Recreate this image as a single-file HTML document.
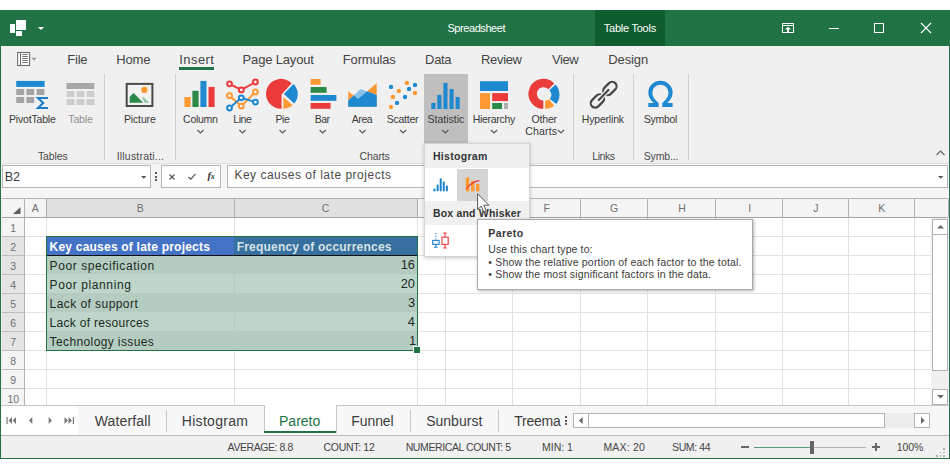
<!DOCTYPE html>
<html>
<head>
<meta charset="utf-8">
<title>Spreadsheet</title>
<style>
*{box-sizing:border-box;margin:0;padding:0}
html,body{width:950px;height:469px;overflow:hidden;background:#fff}
body{font-family:"Liberation Sans",sans-serif;color:#3c3c3c;position:relative}
.a,.t,svg{position:absolute}
.t{white-space:nowrap;line-height:1}
svg{overflow:visible}
.vsep{position:absolute;width:1px;background:#d0d0d0;top:74px;height:86px}
.ch{position:absolute;height:20px;top:198px;border-right:1px solid #c4c4c4;border-bottom:1px solid #a8a8a8;font-size:11px;color:#666;text-align:center;line-height:19px}
.rh{position:absolute;left:2px;width:23px;height:20px;border-bottom:1px solid #d0d0d0;border-right:1px solid #a8a8a8;font-size:11px;color:#666;text-align:center;line-height:20px}
.hl{position:absolute;height:1px;background:#e1e1e1;left:25px;width:906px}
.vl{position:absolute;width:1px;background:#e1e1e1;top:218px;height:188px}
</style>
</head>
<body>
<!-- window -->
<div class="a" style="left:0;top:10px;width:950px;height:449px;background:#f0f0f0;border:1px solid #217346;border-top:0"></div>
<div class="a" style="left:0;top:10px;width:950px;height:36px;background:#217346"></div>
<div class="a" style="left:594.6px;top:10px;width:70.8px;height:36px;background:#0f5c2e"></div>

<!-- title bar icons -->
<div class="a" style="left:16px;top:20px;width:10px;height:10px;background:#fff"></div>
<div class="a" style="left:10px;top:24px;width:5px;height:9px;background:#fff"></div>
<div class="a" style="left:16px;top:31px;width:6px;height:5px;background:#fff"></div>
<svg style="left:38px;top:27px" width="6" height="3"><path d="M0 0H6L3 3Z" fill="#fff"/></svg>
<svg style="left:782px;top:23px" width="12" height="10" fill="none" stroke="#fff" stroke-width="1"><rect x=".5" y=".5" width="11" height="9"/><path d="M.5 2.5H11.5"/><path d="M6 3.7L9 6.6H6.9V9H5.1V6.6H3Z" fill="#fff" stroke="none"/></svg>
<div class="a" style="left:829px;top:28px;width:10px;height:1px;background:#fff"></div>
<div class="a" style="left:874px;top:23px;width:10px;height:10px;border:1px solid #fff"></div>
<svg style="left:921px;top:23px" width="10" height="10" stroke="#fff" stroke-width="1.1"><path d="M0 0L10 10M10 0L0 10"/></svg>

<!-- menu icon -->
<svg style="left:17px;top:52px" width="22" height="14" fill="none"><rect x=".6" y=".5" width="12" height="13" fill="#fff" stroke="#6e6e6e" stroke-width="1.1"/><path d="M3.5 1V13" stroke="#6e6e6e"/><path d="M5.2 2.5H10.8M5.2 4.5H10.8M5.2 6.5H10.8M5.2 8.5H10.8M5.2 10.5H10.8" stroke="#777"/><path d="M14.3 5.7H19.6L17 8.7Z" fill="#9a9a9a"/></svg>

<!-- insert underline -->
<div class="a" style="left:179.3px;top:67px;width:34.7px;height:3px;background:#217346"></div>

<!-- ribbon separators -->
<div class="vsep" style="left:104.2px"></div>
<div class="vsep" style="left:174.5px"></div>
<div class="vsep" style="left:573px"></div>
<div class="vsep" style="left:633px"></div>
<div class="vsep" style="left:687.5px"></div>

<!-- statistic highlight -->
<div class="a" style="left:423.5px;top:74px;width:44.3px;height:70px;background:#bfbfbf"></div>

<!-- PivotTable -->
<svg style="left:16px;top:80px" width="34" height="30">
<rect x=".2" y=".9" width="28.4" height="6" fill="#1e88d0"/>
<g fill="#a3a3a3"><rect x=".2" y="9" width="8" height="6"/><rect x="10.4" y="9" width="7.8" height="6"/><rect x="20.6" y="9" width="7.8" height="6"/><rect x=".2" y="17" width="8" height="6"/><rect x="10.4" y="17" width="7.8" height="6"/></g>
<path d="M32 18H22L27.2 23L22 28H32" fill="none" stroke="#1b7fc8" stroke-width="2.1" stroke-linejoin="miter"/>
</svg>
<!-- Table -->
<svg style="left:66px;top:82px" width="30" height="24">
<rect x=".5" y="1" width="27.8" height="6" fill="#a8a8a8"/>
<g fill="#cdcdcd"><rect x=".5" y="9" width="8" height="6"/><rect x="10.6" y="9" width="7.8" height="6"/><rect x="20.6" y="9" width="7.8" height="6"/><rect x=".5" y="17" width="8" height="6"/><rect x="10.6" y="17" width="7.8" height="6"/><rect x="20.6" y="17" width="7.8" height="6"/></g>
</svg>
<!-- Picture -->
<svg style="left:125px;top:82px" width="30" height="26">
<rect x="1.7" y="1.9" width="25.7" height="22.1" fill="#f2f2f2" stroke="#4c4a4a" stroke-width="2"/>
<circle cx="19.4" cy="7.9" r="3.1" fill="#ff9933"/>
<path d="M4.7 20.7V14.7L8.6 11L18.2 20.7Z" fill="#2b8a4a"/>
<path d="M17 16L18.6 14.9L24.2 20.7H20Z" fill="#8fc3a0"/>
</svg>
<!-- Column -->
<svg style="left:184px;top:80px" width="32" height="28">
<rect x=".4" y="17" width="6.2" height="10" fill="#ff9933"/><rect x="8.4" y="10.8" width="6.2" height="16.2" fill="#2b8a4a"/><rect x="16.4" y=".9" width="6.1" height="26.1" fill="#1e88d0"/><rect x="24.5" y="6.9" width="6.1" height="20.1" fill="#ec3b3b"/>
</svg>
<!-- Line -->
<svg style="left:226px;top:78px" width="34" height="34" fill="none" stroke-width="2">
<g stroke="#ff9933"><path d="M3.5 17.7L15.3 28.1L29.4 13.9"/><circle cx="3.5" cy="17.7" r="2.4" fill="#f2f2f2"/><circle cx="15.3" cy="28.1" r="2.4" fill="#f2f2f2"/><circle cx="29.4" cy="13.9" r="2.4" fill="#f2f2f2"/></g>
<g stroke="#ec3b3b"><path d="M3.5 5.8L15.3 11.9L29.4 4"/><circle cx="3.5" cy="5.8" r="2.4" fill="#f2f2f2"/><circle cx="15.3" cy="11.9" r="2.4" fill="#f2f2f2"/><circle cx="29.4" cy="4" r="2.4" fill="#f2f2f2"/></g>
<g stroke="#1e88d0"><path d="M3.5 30L15.3 19.8L29.4 24.1"/><circle cx="3.5" cy="30" r="2.4" fill="#f2f2f2"/><circle cx="15.3" cy="19.8" r="2.4" fill="#f2f2f2"/><circle cx="29.4" cy="24.1" r="2.4" fill="#f2f2f2"/></g>
</svg>
<!-- Pie -->
<svg style="left:266.8px;top:78px" width="32" height="32">
<path d="M14.6 16.6L24.6 5.2A15 15 0 1 0 14.6 30.8Z" fill="#ec3b3b"/>
<path d="M16.9 16.1L26.5 5.9A14.4 14.4 0 0 1 27.2 25.6Z" fill="#1e88d0"/>
<path d="M16.4 19L25.6 27.3A14.6 14.6 0 0 1 16.4 30.8Z" fill="#ff9933"/>
</svg>
<!-- Bar -->
<svg style="left:310px;top:78px" width="28" height="32">
<rect x=".6" y="1" width="10" height="5.8" fill="#ff9933"/><rect x=".6" y="9" width="16" height="5.8" fill="#2b8a4a"/><rect x=".6" y="17" width="25.8" height="5.8" fill="#1e88d0"/><rect x=".6" y="25" width="20" height="5.8" fill="#ec3b3b"/>
</svg>
<!-- Area -->
<svg style="left:348px;top:82px" width="30" height="26">
<path d="M.3 9.2L10.3 16.9L28.7 1.1V24.7H.3Z" fill="#ff9933"/>
<path d="M.3 18.6L12.5 7L19.3 9.6L28.7 13V24.7H.3Z" fill="#8cc0e6"/>
<path d="M.3 18.6L5.8 13.4L10.3 16.9L19 9.5L28.7 13V24.7H.3Z" fill="#1e88d0"/>
</svg>
<!-- Scatter -->
<svg style="left:388px;top:80px" width="30" height="30">
<g fill="#1e88d0"><circle cx="3" cy="6.9" r="2.2"/><circle cx="21" cy="8.9" r="2.2"/><circle cx="27" cy="5" r="2.2"/><circle cx="17" cy="17" r="2.2"/><circle cx="9" cy="22.9" r="2.2"/></g>
<g fill="#ff9933"><circle cx="18.9" cy="2.9" r="2.2"/><circle cx="10.8" cy="10.9" r="2.2"/><circle cx="27" cy="13" r="2.2"/><circle cx="4.9" cy="17" r="2.2"/><circle cx="3" cy="27" r="2.2"/></g>
</svg>
<!-- Statistic -->
<svg style="left:431px;top:82px" width="30" height="28" fill="#1e88d0">
<rect x=".3" y="20.9" width="4.2" height="6.1"/><rect x="6.3" y="12.9" width="4.2" height="14.1"/><rect x="12.4" y=".9" width="4.1" height="26.1"/><rect x="18.5" y="6.9" width="4.1" height="20.1"/><rect x="24.6" y="14.9" width="4.1" height="12.1"/>
</svg>
<!-- Hierarchy -->
<svg style="left:480px;top:81px" width="28" height="28">
<rect x="0" y=".2" width="28" height="9.8" fill="#1e88d0"/><rect x="0" y="12.1" width="10.1" height="15.9" fill="#ff9933"/><rect x="12.2" y="12.1" width="15.8" height="8" fill="#ec3b3b"/><rect x="12.2" y="22" width="9.8" height="6" fill="#2b8a4a"/><rect x="24" y="22" width="4" height="6" fill="#b0b0b0"/>
</svg>
<!-- Other charts donut -->
<svg style="left:529px;top:78px" width="32" height="32" fill="none" stroke-width="8.3">
<path d="M14.3 26.8A10.9 10.9 0 1 1 22.3 8.3" stroke="#ec3b3b"/>
<path d="M23.5 9.4A10.9 10.9 0 0 1 24 23.4" stroke="#1e88d0"/>
<path d="M22.7 24.6A10.9 10.9 0 0 1 16.1 26.8" stroke="#ff9933"/>
</svg>
<!-- Hyperlink -->
<svg style="left:589px;top:80px" width="30" height="30" fill="none" stroke="#484848" stroke-width="2.2" stroke-linecap="round">
<g transform="rotate(-45 20.9 8.5)"><rect x="13.3" y="4.1" width="15.2" height="8.8" rx="4.4"/></g>
<g transform="rotate(-45 8.4 21)"><rect x=".8" y="16.6" width="15.2" height="8.8" rx="4.4"/></g>
<path d="M9.6 20.2L19.6 9.8" stroke="#f0f0f0" stroke-width="4.6" stroke-linecap="butt"/>
<path d="M9.8 20L19.4 10"/>
</svg>
<!-- Symbol omega -->
<svg style="left:648px;top:80px" width="26" height="28">
<path d="M.3 26.9H10.6V22.9C6.5 20 4.3 16.5 4.3 12.5A8.1 7.7 0 0 1 20.5 12.5C20.5 16.5 18.4 20 14.3 22.9V26.9H24.6V22.9H19.2C22.8 20 24.6 16.5 24.6 12.5A12.15 11.7 0 0 0 .3 12.5C.3 16.5 2.1 20 5.7 22.9H.3Z" fill="#1e88d0"/>
</svg>
<!-- chevrons -->
<svg style="left:0;top:0" width="950" height="140" fill="none" stroke="#5a5a5a" stroke-width="1.25">
<path d="M197.4 130L200.5 133L203.6 130"/>
<path d="M239.4 130L242.5 133L245.6 130"/>
<path d="M279.5 130L282.6 133L285.7 130"/>
<path d="M319.6 130L322.7 133L325.8 130"/>
<path d="M359.4 130L362.5 133L365.6 130"/>
<path d="M400 130L403.1 133L406.2 130"/>
<path d="M442.2 130L445.3 133L448.4 130"/>
<path d="M490.9 130L494 133L497.1 130"/>
<path d="M557.9 130L561 133L564.1 130"/>
</svg>


<!-- ribbon collapse caret -->
<svg style="left:935.7px;top:149.7px" width="9" height="6" fill="none" stroke="#666" stroke-width="1.2"><path d="M.5 5L4.5 1L8.5 5"/></svg>

<!-- formula bar -->
<div class="a" style="left:1px;top:163px;width:948px;height:2px;background:#dedede"></div>
<div class="a" style="left:1px;top:164px;width:948px;height:34px;background:#f5f5f5"></div>
<div class="a" style="left:2px;top:165px;width:149px;height:23px;background:#fff;border:1px solid #b6b6b6"></div>
<svg style="left:141px;top:175.5px" width="6" height="3"><path d="M0 0H5.4L2.7 2.8Z" fill="#555"/></svg>
<div class="a" style="left:155px;top:172px;width:2px;height:2px;background:#5a5a5a"></div>
<div class="a" style="left:155px;top:175.5px;width:2px;height:2px;background:#5a5a5a"></div>
<div class="a" style="left:155px;top:179px;width:2px;height:2px;background:#5a5a5a"></div>
<div class="a" style="left:161px;top:165px;width:60px;height:23px;background:#fff;border:1px solid #b6b6b6"></div>
<svg style="left:169px;top:174px" width="6" height="6" stroke="#555" stroke-width="1.1"><path d="M.5 .5L5.5 5.5M5.5 .5L.5 5.5"/></svg>
<svg style="left:188px;top:173px" width="8" height="7" fill="none" stroke="#555" stroke-width="1.2"><path d="M.5 4L2.8 6.2L7.5 .8"/></svg>
<div class="t" style="left:207.5px;top:170.6px;font-family:'Liberation Serif',serif;font-style:italic;font-weight:700;font-size:10.5px;color:#333">f<span style="font-size:8px;margin-left:-0.3px">x</span></div>
<div class="a" style="left:227px;top:165px;width:721px;height:23px;background:#fff;border:1px solid #b6b6b6"></div>
<svg style="left:938px;top:175.5px" width="6" height="3"><path d="M0 0H5.4L2.7 2.8Z" fill="#555"/></svg>

<div class="a" style="left:2px;top:198px;width:946px;height:208px;background:#fff"></div>
<div class="a" style="left:2px;top:198px;width:946px;height:20px;background:#f4f4f4;border-top:1px solid #b2b2b2;border-bottom:1px solid #a4a4a4"></div>
<div class="a" style="left:47px;top:199px;width:370px;height:18px;background:#e0e0e0"></div>
<div class="a" style="left:24.0px;top:199px;width:1px;height:18px;background:#b2b2b2"></div>
<div class="a" style="left:46.0px;top:199px;width:1px;height:18px;background:#b2b2b2"></div>
<div class="a" style="left:234.0px;top:199px;width:1px;height:18px;background:#b2b2b2"></div>
<div class="a" style="left:417.0px;top:199px;width:1px;height:18px;background:#b2b2b2"></div>
<div class="a" style="left:445.0px;top:199px;width:1px;height:18px;background:#b2b2b2"></div>
<div class="a" style="left:512.0px;top:199px;width:1px;height:18px;background:#b2b2b2"></div>
<div class="a" style="left:580.0px;top:199px;width:1px;height:18px;background:#b2b2b2"></div>
<div class="a" style="left:647.0px;top:199px;width:1px;height:18px;background:#b2b2b2"></div>
<div class="a" style="left:715.0px;top:199px;width:1px;height:18px;background:#b2b2b2"></div>
<div class="a" style="left:782.0px;top:199px;width:1px;height:18px;background:#b2b2b2"></div>
<div class="a" style="left:848.0px;top:199px;width:1px;height:18px;background:#b2b2b2"></div>
<div class="a" style="left:914.0px;top:199px;width:1px;height:18px;background:#b2b2b2"></div>
<div class="a" style="left:948.0px;top:199px;width:1px;height:18px;background:#b2b2b2"></div>
<div class="a" style="left:2px;top:218px;width:22px;height:188px;background:#f4f4f4"></div>
<div class="a" style="left:2px;top:237px;width:22px;height:113px;background:#e4e4e4"></div>
<div class="a" style="left:24px;top:218px;width:1px;height:188px;background:#b2b2b2"></div>
<div class="a" style="left:2px;top:236px;width:22px;height:1px;background:#bebebe"></div>
<div class="a" style="left:25px;top:236px;width:906px;height:1px;background:#e2e2e2"></div>
<div class="a" style="left:2px;top:255px;width:22px;height:1px;background:#bebebe"></div>
<div class="a" style="left:25px;top:255px;width:906px;height:1px;background:#e2e2e2"></div>
<div class="a" style="left:2px;top:274px;width:22px;height:1px;background:#bebebe"></div>
<div class="a" style="left:25px;top:274px;width:906px;height:1px;background:#e2e2e2"></div>
<div class="a" style="left:2px;top:293px;width:22px;height:1px;background:#bebebe"></div>
<div class="a" style="left:25px;top:293px;width:906px;height:1px;background:#e2e2e2"></div>
<div class="a" style="left:2px;top:312px;width:22px;height:1px;background:#bebebe"></div>
<div class="a" style="left:25px;top:312px;width:906px;height:1px;background:#e2e2e2"></div>
<div class="a" style="left:2px;top:331px;width:22px;height:1px;background:#bebebe"></div>
<div class="a" style="left:25px;top:331px;width:906px;height:1px;background:#e2e2e2"></div>
<div class="a" style="left:2px;top:350px;width:22px;height:1px;background:#bebebe"></div>
<div class="a" style="left:25px;top:350px;width:906px;height:1px;background:#e2e2e2"></div>
<div class="a" style="left:2px;top:369px;width:22px;height:1px;background:#bebebe"></div>
<div class="a" style="left:25px;top:369px;width:906px;height:1px;background:#e2e2e2"></div>
<div class="a" style="left:2px;top:388px;width:22px;height:1px;background:#bebebe"></div>
<div class="a" style="left:25px;top:388px;width:906px;height:1px;background:#e2e2e2"></div>
<div class="a" style="left:2px;top:407px;width:22px;height:1px;background:#bebebe"></div>
<div class="a" style="left:25px;top:407px;width:906px;height:1px;background:#e2e2e2"></div>
<div class="a" style="left:46.0px;top:218px;width:1px;height:188px;background:#e2e2e2"></div>
<div class="a" style="left:234.0px;top:218px;width:1px;height:188px;background:#e2e2e2"></div>
<div class="a" style="left:417.0px;top:218px;width:1px;height:188px;background:#e2e2e2"></div>
<div class="a" style="left:445.0px;top:218px;width:1px;height:188px;background:#e2e2e2"></div>
<div class="a" style="left:512.0px;top:218px;width:1px;height:188px;background:#e2e2e2"></div>
<div class="a" style="left:580.0px;top:218px;width:1px;height:188px;background:#e2e2e2"></div>
<div class="a" style="left:647.0px;top:218px;width:1px;height:188px;background:#e2e2e2"></div>
<div class="a" style="left:715.0px;top:218px;width:1px;height:188px;background:#e2e2e2"></div>
<div class="a" style="left:782.0px;top:218px;width:1px;height:188px;background:#e2e2e2"></div>
<div class="a" style="left:848.0px;top:218px;width:1px;height:188px;background:#e2e2e2"></div>
<div class="a" style="left:914.0px;top:218px;width:1px;height:188px;background:#e2e2e2"></div>
<div class="a" style="left:46px;top:236px;width:188px;height:19px;background:#4472c4"></div>
<div class="a" style="left:234px;top:236px;width:184px;height:19px;background:#376f9f"></div>
<div class="a" style="left:46px;top:255px;width:372px;height:19px;background:#b5cdc0"></div>
<div class="a" style="left:46px;top:274px;width:372px;height:19px;background:#bed5c9"></div>
<div class="a" style="left:234px;top:275px;width:1px;height:18px;background:#b3cabd"></div>
<div class="a" style="left:46px;top:293px;width:372px;height:19px;background:#b5cdc0"></div>
<div class="a" style="left:46px;top:312px;width:372px;height:19px;background:#bed5c9"></div>
<div class="a" style="left:234px;top:313px;width:1px;height:18px;background:#b3cabd"></div>
<div class="a" style="left:46px;top:331px;width:372px;height:19px;background:#b5cdc0"></div>
<div class="a" style="left:47px;top:254.5px;width:370px;height:1px;background:#111"></div>
<div class="a" style="left:46px;top:236px;width:372px;height:115px;border:1px solid #217346"></div>
<div class="a" style="left:413px;top:346px;width:7px;height:7px;background:#217346;border:1px solid #fff;border-right:0;border-bottom:0"></div>
<div class="a" style="left:931px;top:218px;width:17px;height:188px;background:#f0f0f0"></div>
<div class="a" style="left:932px;top:219px;width:15.5px;height:16px;background:#fff;border:1px solid #b4b4b4"></div>
<div class="a" style="left:932px;top:234px;width:15.5px;height:137px;background:#fff;border:1px solid #b4b4b4"></div>
<div class="a" style="left:932px;top:388.5px;width:15.5px;height:16px;background:#fff;border:1px solid #b4b4b4"></div>
<svg style="left:936.5px;top:225px" width="7" height="4"><path d="M0 3.6L3.5 0L7 3.6Z" fill="#666"/></svg>
<svg style="left:936.5px;top:395px" width="7" height="4"><path d="M0 0L3.5 3.6L7 0Z" fill="#666"/></svg>
<svg style="left:13px;top:207px" width="8" height="7"><path d="M7.5 0V7H0Z" fill="#5e5e5e"/></svg>

<!-- popup -->
<div class="a" style="left:424px;top:143px;width:106px;height:114px;background:#fff;border:1px solid #d4d4d4;box-shadow:0 1px 4px rgba(0,0,0,.22);z-index:5"></div>
<div class="a" style="left:425px;top:144px;width:104px;height:24px;background:#f0f0f0;z-index:5"></div>
<div class="a" style="left:425px;top:201px;width:104px;height:23.5px;background:#f0f0f0;z-index:5"></div>
<div class="a" style="left:457px;top:169px;width:31px;height:31.5px;background:#d4d4d4;z-index:5"></div>
<!-- histogram small icon -->
<svg style="left:433px;top:178px;z-index:6" width="16" height="14" fill="#1e82cd">
<rect x=".5" y="10.4" width="2" height="3" rx=".8"/><rect x="3.6" y="6.6" width="2" height="6.8" rx=".8"/><rect x="6.7" y=".2" width="2" height="13.2" rx=".8"/><rect x="9.8" y="3.6" width="2" height="9.8" rx=".8"/><rect x="12.9" y="7.5" width="2" height="5.9" rx=".8"/></svg>
<!-- pareto small icon -->
<svg style="left:465px;top:177px;z-index:6" width="16" height="15">
<rect x=".8" y=".5" width="3.5" height="13.9" fill="#ff9933"/><rect x="6" y="3.8" width="3.4" height="10.6" fill="#ff9933"/><rect x="11" y="6.8" width="3.4" height="7.6" fill="#ff9933"/>
<path d="M1 12C4.5 7.5 8 4.2 14.3 3.6" fill="none" stroke="#e8383d" stroke-width="1.1"/></svg>
<!-- box and whisker small icon -->
<svg style="left:432px;top:232px;z-index:6" width="18" height="17" fill="none">
<path d="M3.9 1V8" stroke="#1e82cd" stroke-width="1" stroke-dasharray="1.3 1.3"/><rect x=".7" y="8.4" width="6.4" height="4" stroke="#1e82cd" stroke-width="1.1"/><path d="M3.9 12.4V15M2 15.3H5.8" stroke="#1e82cd" stroke-width="1.1"/>
<path d="M13 1V5M11.2 1H14.8" stroke="#e8383d" stroke-width="1.1"/><rect x="10" y="5.2" width="6.2" height="7.2" stroke="#e8383d" stroke-width="1.1"/><path d="M13 12.4V16M11.2 16H14.8" stroke="#e8383d" stroke-width="1.1"/></svg>
<!-- tooltip -->
<div class="a" style="left:477px;top:218.5px;width:275.5px;height:71.5px;background:#fff;border:1px solid #a9a9a9;box-shadow:1px 1px 3px rgba(0,0,0,.3);z-index:7"></div>
<!-- cursor -->
<svg style="left:477px;top:192.5px;z-index:9" width="13" height="20"><path d="M.6 .8V16.6L4.3 13.1L6.9 19L9.3 18L6.8 12.2H11.8Z" fill="#fff" stroke="#444" stroke-width=".9" stroke-linejoin="miter"/></svg>


<div class="a" style="left:1px;top:405px;width:948px;height:1px;background:#c6c6c6"></div>
<div class="a" style="left:1px;top:406px;width:948px;height:29px;background:#f7f7f7"></div>
<div class="a" style="left:1px;top:406px;width:77px;height:29px;background:#fff"></div>
<div class="a" style="left:1px;top:435px;width:948px;height:1px;background:#b8b8b8"></div>
<div class="a" style="left:263.5px;top:405px;width:73px;height:28px;background:#fff;border-left:1px solid #c6c6c6;border-right:1px solid #c6c6c6"></div>
<div class="a" style="left:264px;top:431.2px;width:72px;height:2px;background:#217346"></div>
<div class="a" style="left:166px;top:410px;width:1px;height:22px;background:#c6c6c6"></div>
<div class="a" style="left:410px;top:410px;width:1px;height:22px;background:#c6c6c6"></div>
<div class="a" style="left:498px;top:410px;width:1px;height:22px;background:#c6c6c6"></div>
<svg style="left:6px;top:416.5px" width="70" height="7" fill="#777"><path d="M.5 0H1.7V7H.5Z"/><path d="M6 0V7L2.6 3.5Z"/><path d="M10 0V7L6.6 3.5Z"/><path d="M26.3 0V7L23 3.5Z"/><path d="M42.7 0V7L46 3.5Z"/><path d="M58.5 0V7L61.9 3.5Z"/><path d="M62.5 0V7L65.9 3.5Z"/><path d="M66.8 0H68V7H66.8Z"/></svg>
<div class="a" style="left:565px;top:416.0px;width:2px;height:2px;background:#5a5a5a"></div>
<div class="a" style="left:565px;top:419.5px;width:2px;height:2px;background:#5a5a5a"></div>
<div class="a" style="left:565px;top:423.0px;width:2px;height:2px;background:#5a5a5a"></div>
<div class="a" style="left:573px;top:413px;width:357px;height:15px;background:#ececec"></div>
<div class="a" style="left:573px;top:413px;width:16px;height:15px;background:#fff;border:1px solid #b4b4b4"></div>
<div class="a" style="left:588px;top:413px;width:296.5px;height:15px;background:#fff;border:1px solid #b4b4b4"></div>
<div class="a" style="left:914px;top:413px;width:16px;height:15px;background:#fff;border:1px solid #b4b4b4"></div>
<svg style="left:578.5px;top:417px" width="4" height="7"><path d="M3.6 0V7L0 3.5Z" fill="#666"/></svg>
<svg style="left:920.5px;top:417px" width="4" height="7"><path d="M0 0V7L3.6 3.5Z" fill="#666"/></svg>
<div class="a" style="left:741px;top:446px;width:8px;height:2px;background:#666"></div>
<div class="a" style="left:753.5px;top:446.5px;width:57px;height:1px;background:#5a9a76"></div>
<div class="a" style="left:813px;top:446.5px;width:53px;height:1px;background:#b4b4b4"></div>
<div class="a" style="left:809.5px;top:440.5px;width:4.5px;height:13px;background:#666"></div>
<div class="a" style="left:871.5px;top:446px;width:8.5px;height:2px;background:#666"></div>
<div class="a" style="left:874.8px;top:442.7px;width:2px;height:8.5px;background:#666"></div>
<div class="a" style="left:943.0px;top:448.0px;width:1.5px;height:1.5px;background:#b0b0b0"></div>
<div class="a" style="left:943.0px;top:451.5px;width:1.5px;height:1.5px;background:#b0b0b0"></div>
<div class="a" style="left:943.0px;top:455.0px;width:1.5px;height:1.5px;background:#b0b0b0"></div>
<div class="a" style="left:939.5px;top:451.5px;width:1.5px;height:1.5px;background:#b0b0b0"></div>
<div class="a" style="left:939.5px;top:455.0px;width:1.5px;height:1.5px;background:#b0b0b0"></div>
<div class="a" style="left:936.0px;top:455.0px;width:1.5px;height:1.5px;background:#b0b0b0"></div>

<div class="t" style="left:447.40px;top:22.69px;font-size:11px;color:#fff;letter-spacing:-0.422px">Spreadsheet</div>
<div class="t" style="left:603.80px;top:22.69px;font-size:11px;color:#fff;letter-spacing:-0.243px">Table Tools</div>
<div class="t" style="left:67.30px;top:53.10px;font-size:13px;color:#444;letter-spacing:-0.239px">File</div>
<div class="t" style="left:116.30px;top:53.10px;font-size:13px;color:#444;letter-spacing:-0.149px">Home</div>
<div class="t" style="left:179.30px;top:53.10px;font-size:13px;color:#444;letter-spacing:0.420px">Insert</div>
<div class="t" style="left:242.60px;top:53.10px;font-size:13px;color:#444;letter-spacing:-0.169px">Page Layout</div>
<div class="t" style="left:342.80px;top:53.10px;font-size:13px;color:#444;letter-spacing:-0.168px">Formulas</div>
<div class="t" style="left:425.10px;top:53.10px;font-size:13px;color:#444;letter-spacing:-0.343px">Data</div>
<div class="t" style="left:481.00px;top:53.10px;font-size:13px;color:#444;letter-spacing:-0.327px">Review</div>
<div class="t" style="left:552.00px;top:53.10px;font-size:13px;color:#444;letter-spacing:-0.450px">View</div>
<div class="t" style="left:608.30px;top:53.10px;font-size:13px;color:#444;letter-spacing:-0.127px">Design</div>
<div class="t" style="left:8.90px;top:114.11px;font-size:10.5px;color:#3a3a3a;letter-spacing:-0.167px">PivotTable</div>
<div class="t" style="left:123.90px;top:114.11px;font-size:10.5px;color:#3a3a3a;letter-spacing:-0.123px">Picture</div>
<div class="t" style="left:183.10px;top:114.11px;font-size:10.5px;color:#3a3a3a;letter-spacing:-0.268px">Column</div>
<div class="t" style="left:233.32px;top:114.11px;font-size:10.5px;color:#3a3a3a;letter-spacing:-0.450px">Line</div>
<div class="t" style="left:275.48px;top:114.11px;font-size:10.5px;color:#3a3a3a;letter-spacing:-0.450px">Pie</div>
<div class="t" style="left:314.63px;top:114.11px;font-size:10.5px;color:#3a3a3a;letter-spacing:-0.450px">Bar</div>
<div class="t" style="left:351.81px;top:114.11px;font-size:10.5px;color:#3a3a3a;letter-spacing:-0.450px">Area</div>
<div class="t" style="left:386.70px;top:114.11px;font-size:10.5px;color:#3a3a3a;letter-spacing:-0.245px">Scatter</div>
<div class="t" style="left:427.60px;top:114.11px;font-size:10.5px;color:#3a3a3a;letter-spacing:-0.014px">Statistic</div>
<div class="t" style="left:472.80px;top:114.11px;font-size:10.5px;color:#3a3a3a;letter-spacing:-0.310px">Hierarchy</div>
<div class="t" style="left:531.50px;top:114.11px;font-size:10.5px;color:#3a3a3a;letter-spacing:-0.166px">Other</div>
<div class="t" style="left:581.80px;top:114.11px;font-size:10.5px;color:#3a3a3a;letter-spacing:-0.189px">Hyperlink</div>
<div class="t" style="left:643.80px;top:114.11px;font-size:10.5px;color:#3a3a3a;letter-spacing:-0.296px">Symbol</div>
<div class="t" style="left:68.30px;top:114.11px;font-size:10.5px;color:#909090;letter-spacing:-0.140px">Table</div>
<div class="t" style="left:525.20px;top:126.41px;font-size:10.5px;color:#3a3a3a;letter-spacing:0.185px">Charts</div>
<div class="t" style="left:37.90px;top:151.11px;font-size:10.5px;color:#4a4a4a;letter-spacing:-0.120px">Tables</div>
<div class="t" style="left:116.70px;top:151.11px;font-size:10.5px;color:#4a4a4a;letter-spacing:0.199px">Illustrati...</div>
<div class="t" style="left:359.60px;top:151.11px;font-size:10.5px;color:#4a4a4a;letter-spacing:-0.155px">Charts</div>
<div class="t" style="left:592.32px;top:151.11px;font-size:10.5px;color:#4a4a4a;letter-spacing:-0.450px">Links</div>
<div class="t" style="left:643.80px;top:151.11px;font-size:10.5px;color:#4a4a4a;letter-spacing:-0.179px">Symb...</div>
<div class="t" style="left:4.70px;top:171.33px;font-size:12.6px;color:#3a3a3a;letter-spacing:0.000px">B2</div>
<div class="t" style="left:234.40px;top:169.44px;font-size:12px;color:#4a4a4a;letter-spacing:0.507px">Key causes of late projects</div>
<div class="t" style="left:432.90px;top:151.41px;font-size:10.5px;color:#333;letter-spacing:0.314px;font-weight:700;z-index:6">Histogram</div>
<div class="t" style="left:432.90px;top:207.81px;font-size:10.5px;color:#333;letter-spacing:0.200px;font-weight:700;z-index:6">Box and Whisker</div>
<div class="t" style="left:488.30px;top:228.41px;font-size:10.5px;color:#333;letter-spacing:0.447px;font-weight:700;z-index:8">Pareto</div>
<div class="t" style="left:488.30px;top:243.81px;font-size:10.5px;color:#3a3a3a;letter-spacing:0.121px;z-index:8">Use this chart type to:</div>
<div class="t" style="left:488.30px;top:256.71px;font-size:10.5px;color:#3a3a3a;letter-spacing:0.175px;z-index:8">• Show the relative portion of each factor to the total.</div>
<div class="t" style="left:488.30px;top:269.41px;font-size:10.5px;color:#3a3a3a;letter-spacing:0.163px;z-index:8">• Show the most significant factors in the data.</div>
<div class="t" style="left:49.60px;top:241.04px;font-size:12px;color:#fff;letter-spacing:0.213px;font-weight:700">Key causes of late projects</div>
<div class="t" style="left:236.70px;top:241.04px;font-size:12px;color:#d4e3e6;letter-spacing:0.205px;font-weight:700">Frequency of occurrences</div>
<div class="t" style="left:49.60px;top:260.04px;font-size:12px;color:#1c2a24;letter-spacing:0.586px">Poor specification</div>
<div class="t" style="left:49.60px;top:279.04px;font-size:12px;color:#1c2a24;letter-spacing:0.601px">Poor planning</div>
<div class="t" style="left:49.60px;top:298.04px;font-size:12px;color:#1c2a24;letter-spacing:0.435px">Lack of support</div>
<div class="t" style="left:49.60px;top:317.04px;font-size:12px;color:#1c2a24;letter-spacing:0.293px">Lack of resources</div>
<div class="t" style="left:49.60px;top:336.04px;font-size:12px;color:#1c2a24;letter-spacing:0.384px">Technology issues</div>
<div class="t" style="left:400.74px;top:259.36px;font-size:12.8px;color:#1c2a24;letter-spacing:0.000px">16</div>
<div class="t" style="left:400.64px;top:278.36px;font-size:12.8px;color:#1c2a24;letter-spacing:0.000px">20</div>
<div class="t" style="left:407.90px;top:297.36px;font-size:12.8px;color:#1c2a24;letter-spacing:0.000px">3</div>
<div class="t" style="left:407.70px;top:316.36px;font-size:12.8px;color:#1c2a24;letter-spacing:0.000px">4</div>
<div class="t" style="left:408.90px;top:335.36px;font-size:12.8px;color:#1c2a24;letter-spacing:0.000px">1</div>
<div class="t" style="left:94.70px;top:413.85px;font-size:14px;color:#3c3c3c;letter-spacing:0.149px">Waterfall</div>
<div class="t" style="left:181.80px;top:413.85px;font-size:14px;color:#3c3c3c;letter-spacing:0.296px">Histogram</div>
<div class="t" style="left:279.00px;top:413.85px;font-size:14px;color:#217346;letter-spacing:0.008px">Pareto</div>
<div class="t" style="left:351.20px;top:413.85px;font-size:14px;color:#3c3c3c;letter-spacing:-0.059px">Funnel</div>
<div class="t" style="left:426.20px;top:413.85px;font-size:14px;color:#3c3c3c;letter-spacing:0.008px">Sunburst</div>
<div class="t" style="left:514.30px;top:413.85px;font-size:14px;color:#3c3c3c;letter-spacing:-0.246px">Treema</div>
<div class="t" style="left:227.60px;top:442.11px;font-size:10.5px;color:#444;letter-spacing:-0.425px">AVERAGE: 8.8</div>
<div class="t" style="left:323.60px;top:442.11px;font-size:10.5px;color:#444;letter-spacing:-0.317px">COUNT: 12</div>
<div class="t" style="left:405.70px;top:442.11px;font-size:10.5px;color:#444;letter-spacing:-0.398px">NUMERICAL COUNT: 5</div>
<div class="t" style="left:542.00px;top:442.11px;font-size:10.5px;color:#444;letter-spacing:-0.016px">MIN: 1</div>
<div class="t" style="left:603.40px;top:442.11px;font-size:10.5px;color:#444;letter-spacing:0.195px">MAX: 20</div>
<div class="t" style="left:672.00px;top:442.11px;font-size:10.5px;color:#444;letter-spacing:-0.368px">SUM: 44</div>
<div class="t" style="left:896.80px;top:442.11px;font-size:10.5px;color:#444;letter-spacing:-0.140px">100%</div>
<div class="t" style="left:31.80px;top:203.41px;font-size:10.5px;color:#707070;letter-spacing:0.000px">A</div>
<div class="t" style="left:136.80px;top:203.41px;font-size:10.5px;color:#707070;letter-spacing:0.000px">B</div>
<div class="t" style="left:321.80px;top:203.41px;font-size:10.5px;color:#707070;letter-spacing:0.000px">C</div>
<div class="t" style="left:427.30px;top:203.41px;font-size:10.5px;color:#707070;letter-spacing:0.000px">D</div>
<div class="t" style="left:475.55px;top:203.41px;font-size:10.5px;color:#707070;letter-spacing:0.000px">E</div>
<div class="t" style="left:543.55px;top:203.41px;font-size:10.5px;color:#707070;letter-spacing:0.000px">F</div>
<div class="t" style="left:610.05px;top:203.41px;font-size:10.5px;color:#707070;letter-spacing:0.000px">G</div>
<div class="t" style="left:678.30px;top:203.41px;font-size:10.5px;color:#707070;letter-spacing:0.000px">H</div>
<div class="t" style="left:748.30px;top:203.41px;font-size:10.5px;color:#707070;letter-spacing:0.000px">I</div>
<div class="t" style="left:813.30px;top:203.41px;font-size:10.5px;color:#707070;letter-spacing:0.000px">J</div>
<div class="t" style="left:878.30px;top:203.41px;font-size:10.5px;color:#707070;letter-spacing:0.000px">K</div>
<div class="t" style="left:10.30px;top:222.61px;font-size:10.5px;color:#707070;letter-spacing:0.000px">1</div>
<div class="t" style="left:10.30px;top:241.61px;font-size:10.5px;color:#707070;letter-spacing:0.000px">2</div>
<div class="t" style="left:10.30px;top:260.61px;font-size:10.5px;color:#707070;letter-spacing:0.000px">3</div>
<div class="t" style="left:10.30px;top:279.61px;font-size:10.5px;color:#707070;letter-spacing:0.000px">4</div>
<div class="t" style="left:10.30px;top:298.61px;font-size:10.5px;color:#707070;letter-spacing:0.000px">5</div>
<div class="t" style="left:10.30px;top:317.61px;font-size:10.5px;color:#707070;letter-spacing:0.000px">6</div>
<div class="t" style="left:10.30px;top:336.61px;font-size:10.5px;color:#707070;letter-spacing:0.000px">7</div>
<div class="t" style="left:10.30px;top:355.61px;font-size:10.5px;color:#707070;letter-spacing:0.000px">8</div>
<div class="t" style="left:10.30px;top:374.61px;font-size:10.5px;color:#707070;letter-spacing:0.000px">9</div>
<div class="t" style="left:7.38px;top:393.61px;font-size:10.5px;color:#707070;letter-spacing:0.000px">10</div>
</body>
</html>
